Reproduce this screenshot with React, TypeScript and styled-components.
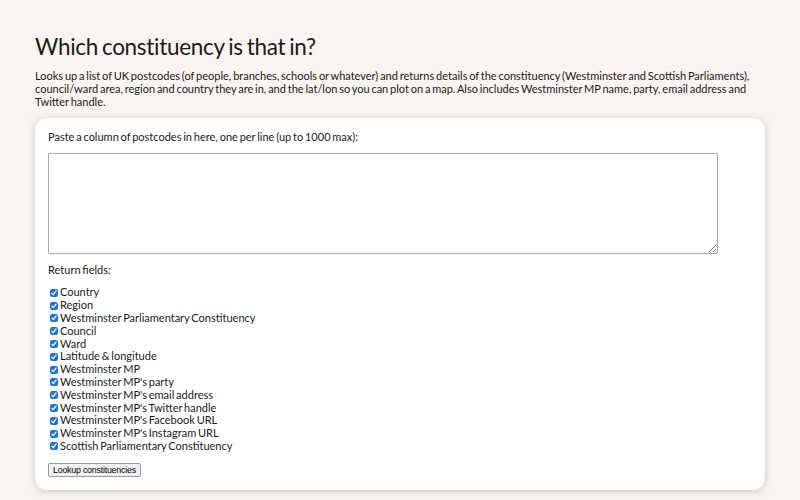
import React from "react";
import styled, { createGlobalStyle } from "styled-components";

const Global = createGlobalStyle`
  html, body { margin: 0; padding: 0; background: #f8f4f1; }
  body { font-family: Lato, "Noto Sans", sans-serif; color: #1a1a1a; word-spacing: -1px; }
`;

const Page = styled.main`
  padding: 33px 35px 10px 35px;
`;

const Title = styled.h1`
  font-size: 22.5px;
  font-weight: 400;
  margin: 0 0 9px 0;
  line-height: 28px;
  word-spacing: -1.5px;
  letter-spacing: -0.3px;
`;

const Intro = styled.p`
  font-size: 11px;
  line-height: 12.8px;
  margin: 0 0 10px 0;
  max-width: 730px;
`;

const Card = styled.form`
  background: #fff;
  border-radius: 12px;
  box-shadow: 0 1px 6px rgba(120, 100, 90, 0.35);
  padding: 12px 13px 13px 13px;
  width: 730px;
  box-sizing: border-box;
`;

const Label = styled.label`
  display: block;
  font-size: 11px;
  line-height: 14px;
  margin-bottom: 9px;
`;

const Area = styled.textarea`
  display: block;
  width: 670px;
  height: 101px;
  box-sizing: border-box;
  border: 1px solid #a8a8a8;
  border-radius: 1px;
  margin: 0 0 9px 0;
`;

const SubLabel = styled.div`
  font-size: 11px;
  line-height: 14px;
  margin-bottom: 9px;
`;

const List = styled.div`
  display: flex;
  flex-direction: column;
  margin-bottom: 4px;
`;

const Row = styled.label`
  display: flex;
  align-items: center;
  font-size: 11px;
  line-height: 12.8px;
  height: 12.8px;
`;

const Box = styled.input`
  width: 8px;
  height: 8px;
  margin: 0 2px 0 2px;
  accent-color: #1a73e8;
`;

const Button = styled.button`
  font-family: "Liberation Sans", Arial, sans-serif;
  font-size: 8.8px;
  letter-spacing: -0.2px;
  word-spacing: 0;
  padding: 1px 4px;
  height: 14px;
  line-height: 10px;
  border: 1px solid #9a9a9a;
  border-radius: 2px;
  background: #f0f0f0;
  color: #000;
`;

const fields = [
  "Country",
  "Region",
  "Westminster Parliamentary Constituency",
  "Council",
  "Ward",
  "Latitude & longitude",
  "Westminster MP",
  "Westminster MP's party",
  "Westminster MP's email address",
  "Westminster MP's Twitter handle",
  "Westminster MP's Facebook URL",
  "Westminster MP's Instagram URL",
  "Scottish Parliamentary Constituency",
];

export default function App() {
  return (
    <>
      <Global />
      <Page>
        <Title>Which constituency is that in?</Title>
        <Intro>
          Looks up a list of UK postcodes (of people, branches, schools or whatever) and returns details of the
          constituency (Westminster and Scottish Parliaments), council/ward area, region and country they are in, and
          the lat/lon so you can plot on a map. Also includes Westminster MP name, party, email address and Twitter
          handle.
        </Intro>
        <Card onSubmit={(e) => e.preventDefault()}>
          <Label htmlFor="pc">Paste a column of postcodes in here, one per line (up to 1000 max):</Label>
          <Area id="pc" />
          <SubLabel>Return fields:</SubLabel>
          <List>
            {fields.map((f) => (
              <Row key={f}>
                <Box type="checkbox" defaultChecked />
                {f}
              </Row>
            ))}
          </List>
          <Button type="submit">Lookup constituencies</Button>
        </Card>
      </Page>
    </>
  );
}
